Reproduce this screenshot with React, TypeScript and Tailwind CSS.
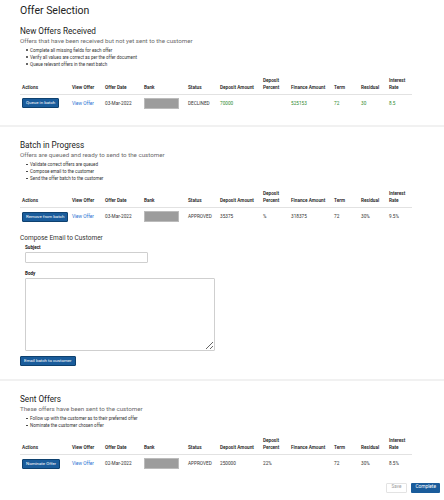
import React from 'react'

type Row = {
  action: string
  date: string
  status: string
  deposit: string
  percent: string
  finance: string
  term: string
  residual: string
  rate: string
  green?: boolean
}

// column widths (px), table starts at the page gutter
const COLS = [50, 33, 39, 44, 32, 43, 28, 43, 27, 28, 25]

const HEADERS: string[][] = [
  ['Actions'],
  ['View Offer'],
  ['Offer Date'],
  ['Bank'],
  ['Status'],
  ['Deposit Amount'],
  ['Deposit', 'Percent'],
  ['Finance Amount'],
  ['Term'],
  ['Residual'],
  ['Interest', 'Rate'],
]

function BlueButton({ children }: { children: React.ReactNode }) {
  return (
    <button className="h-[10px] whitespace-nowrap rounded-[1px] border border-[#0e416f] bg-[#1a5c9b] px-[3px] text-[4.4px] leading-none text-white">
      {children}
    </button>
  )
}

function OfferTable({ row }: { row: Row }) {
  const g = row.green ? 'text-[#2f8a2f]' : 'text-[#333]'
  return (
    <table className="ml-[20px] table-fixed border-collapse text-[4.7px] leading-[7px]">
      <colgroup>
        {COLS.map((w, i) => (
          <col key={i} style={{ width: w }} />
        ))}
      </colgroup>
      <thead>
        <tr className="border-b border-[#e2e2e2]">
          {HEADERS.map((h, i) => (
            <th key={i} className="pb-[3px] pl-[2px] text-left align-bottom font-semibold text-[#222]">
              {h.map((l) => (
                <div key={l} className="whitespace-nowrap">
                  {l}
                </div>
              ))}
            </th>
          ))}
        </tr>
      </thead>
      <tbody>
        <tr className="h-[18px]">
          <td className="pl-[2px]">
            <BlueButton>{row.action}</BlueButton>
          </td>
          <td className="pl-[2px] text-[#1d6fd1]">View Offer</td>
          <td className="pl-[2px] text-[#333]">{row.date}</td>
          <td className="pl-[2px]">
            <div className="h-[11px] w-[35px] border border-[#bbb] bg-[#9c9c9c]" />
          </td>
          <td className="pl-[2px] text-[#333]">{row.status}</td>
          <td className={`pl-[2px] ${g}`}>{row.deposit}</td>
          <td className={`pl-[2px] ${g}`}>{row.percent}</td>
          <td className={`pl-[2px] ${g}`}>{row.finance}</td>
          <td className={`pl-[2px] ${g}`}>{row.term}</td>
          <td className={`pl-[2px] ${g}`}>{row.residual}</td>
          <td className={`pl-[2px] ${g}`}>{row.rate}</td>
        </tr>
      </tbody>
    </table>
  )
}

function SectionHead({ title, sub, bullets }: { title: string; sub: string; bullets: string[] }) {
  return (
    <div className="px-[20px]">
      <h2 className="text-[8.2px] leading-[11px] text-[#222]">{title}</h2>
      <p className="text-[6.2px] leading-[9px] text-[#6b6b6b]">{sub}</p>
      <ul className="mt-[1px] pl-[6px]">
        {bullets.map((b) => (
          <li key={b} className="flex items-center gap-[2.5px] text-[4.5px] leading-[7px] text-[#333]">
            <span className="h-[1.6px] w-[1.6px] rounded-full bg-[#333]" />
            {b}
          </li>
        ))}
      </ul>
    </div>
  )
}

export default function App() {
  return (
    <div className="h-[500px] w-[444px] overflow-hidden bg-white [font-family:Roboto,sans-serif]">
      {/* New offers */}
      <section className="pt-[4px]">
        <h1 className="px-[20px] text-[10.5px] leading-[14px] text-[#222]">Offer Selection</h1>
        <div className="mt-[7.5px]">
          <SectionHead
            title="New Offers Received"
            sub="Offers that have been received but not yet sent to the customer"
            bullets={[
              'Complete all missing fields for each offer',
              'Verify all values are correct as per the offer document',
              'Queue relevant offers in the next batch',
            ]}
          />
        </div>
        <div className="mt-[9px]">
          <OfferTable
            row={{
              action: 'Queue in batch',
              date: '03-Mar-2022',
              status: 'DECLINED',
              deposit: '70000',
              percent: '',
              finance: '525153',
              term: '72',
              residual: '30',
              rate: '8.5',
              green: true,
            }}
          />
        </div>
        <div className="h-[13px]" />
      </section>

      {/* Batch in progress */}
      <section className="border-t-2 border-[#f1f1f1] pt-[13px]">
        <SectionHead
          title="Batch in Progress"
          sub="Offers are queued and ready to send to the customer"
          bullets={[
            'Validate correct offers are queued',
            'Compose email to the customer',
            'Send the offer batch to the customer',
          ]}
        />
        <div className="mt-[8px]">
          <OfferTable
            row={{
              action: 'Remove from batch',
              date: '03-Mar-2022',
              status: 'APPROVED',
              deposit: '35375',
              percent: '%',
              finance: '318375',
              term: '72',
              residual: '30%',
              rate: '9.5%',
            }}
          />
        </div>
        <div className="mt-[8px] px-[20px]">
          <h3 className="text-[6.5px] leading-[9px] text-[#333]">Compose Email to Customer</h3>
          <div className="pl-[5px]">
            <div className="mt-[1px] text-[4.6px] font-bold leading-[7px] text-[#222]">Subject</div>
            <input className="mt-[1px] block h-[11.5px] w-[123px] rounded-[1px] border border-[#cfcfcf] bg-white" />
            <div className="mt-[7px] text-[4.6px] font-bold leading-[7px] text-[#222]">Body</div>
            <textarea className="mt-[1px] block h-[73px] w-[190px] rounded-[1px] border border-[#cfcfcf] bg-white" />
          </div>
          <div className="mt-[5px] flex">
            <BlueButton>Email batch to customer</BlueButton>
          </div>
        </div>
        <div className="h-[13px]" />
      </section>

      {/* Sent offers */}
      <section className="border-t-2 border-[#f1f1f1] pt-[13px]">
        <SectionHead
          title="Sent Offers"
          sub="These offers have been sent to the customer"
          bullets={['Follow up with the customer as to their preferred offer', 'Nominate the customer chosen offer']}
        />
        <div className="mt-[8px]">
          <OfferTable
            row={{
              action: 'Nominate Offer',
              date: '02-Mar-2022',
              status: 'APPROVED',
              deposit: '250000',
              percent: '22%',
              finance: '',
              term: '72',
              residual: '30%',
              rate: '8.5%',
            }}
          />
        </div>
        <div className="mt-[10px] flex justify-end gap-[4px] pr-[4px]">
          <button className="h-[10.5px] rounded-[1px] border border-[#e3e3e3] bg-white px-[5px] text-[4.6px] leading-none text-[#9a9a9a]">
            Save
          </button>
          <button className="h-[10.5px] rounded-[1px] bg-[#1a5c9b] px-[4px] text-[4.8px] leading-none text-white">
            Complete
          </button>
        </div>
      </section>
    </div>
  )
}
